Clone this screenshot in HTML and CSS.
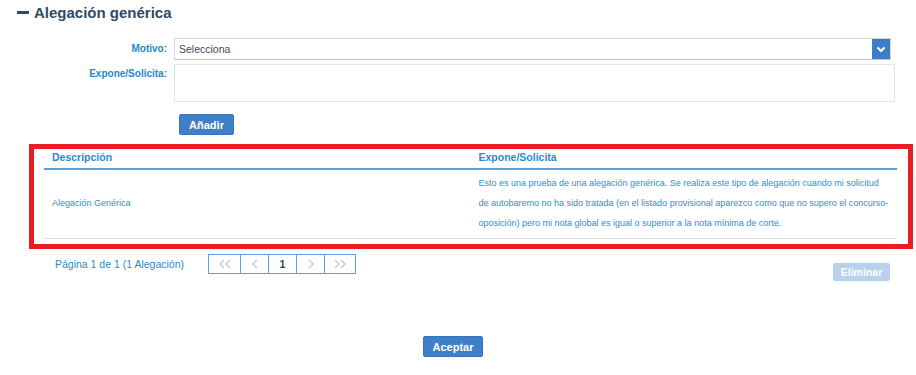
FILE: index.html
```html
<!DOCTYPE html>
<html lang="es">
<head>
    <meta charset="UTF-8">
    <meta name="viewport" content="width=device-width, initial-scale=1.0">
    <title>Alegación genérica</title>
    <link rel="stylesheet" href="styles.css">
</head>
<body>
    <div class="page">
        <h2 class="section-title"><span class="dash"></span>Alegación genérica</h2>

        <div class="form">
            <label class="form-label" for="motivo">Motivo:</label>
            <div class="select" id="motivo">
                <span class="select-value">Selecciona</span>
                <span class="select-btn">
                    <svg width="10" height="7" viewBox="0 0 10 7"><polyline points="1.5,1.5 5,5 8.5,1.5" fill="none" stroke="#fff" stroke-width="2.2"/></svg>
                </span>
            </div>

            <label class="form-label label-top" for="expone">Expone/Solicita:</label>
            <textarea id="expone" class="textarea"></textarea>

            <div class="form-actions">
                <button type="button" class="btn">Añadir</button>
            </div>
        </div>

        <div class="highlight">
            <table class="grid">
                <thead>
                    <tr>
                        <th>Descripción</th>
                        <th>Expone/Solicita</th>
                    </tr>
                </thead>
                <tbody>
                    <tr>
                        <td>Alegación Genérica</td>
                        <td>Esto es una prueba de una alegación genérica. Se realiza este tipo de alegación cuando mi solicitud de autobaremo no ha sido tratada (en el listado provisional aparezco como que no supero el concurso-oposición) pero mi nota global es igual o superior a la nota mínima de corte.</td>
                    </tr>
                </tbody>
            </table>
        </div>

        <div class="pagination">
            <span class="page-info">Página 1 de 1 (1 Alegación)</span>
            <div class="pager">
                <span class="pager-cell wide">
                    <svg width="14" height="10" viewBox="0 0 14 10"><polyline points="6,1 2,5 6,9" fill="none" stroke="#c7d2de" stroke-width="1.6"/><polyline points="12,1 8,5 12,9" fill="none" stroke="#c7d2de" stroke-width="1.6"/></svg>
                </span>
                <span class="pager-cell">
                    <svg width="6" height="10" viewBox="0 0 6 10"><polyline points="5,1 1,5 5,9" fill="none" stroke="#c7d2de" stroke-width="1.6"/></svg>
                </span>
                <span class="pager-cell current">1</span>
                <span class="pager-cell">
                    <svg width="6" height="10" viewBox="0 0 6 10"><polyline points="1,1 5,5 1,9" fill="none" stroke="#c7d2de" stroke-width="1.6"/></svg>
                </span>
                <span class="pager-cell wide">
                    <svg width="14" height="10" viewBox="0 0 14 10"><polyline points="2,1 6,5 2,9" fill="none" stroke="#c7d2de" stroke-width="1.6"/><polyline points="8,1 12,5 8,9" fill="none" stroke="#c7d2de" stroke-width="1.6"/></svg>
                </span>
            </div>
            <button type="button" class="btn btn-disabled">Eliminar</button>
        </div>

        <div class="footer">
            <button type="button" class="btn btn-accept">Aceptar</button>
        </div>
    </div>
</body>
</html>
```

FILE: styles.css
```css
body {
    margin: 0;
    font-family: "Liberation Sans", Arial, sans-serif;
    background: #fff;
    color: #333;
}
.page {
    width: 916px;
}
.section-title {
    display: flex;
    align-items: center;
    gap: 5px;
    margin: 0;
    padding: 3px 0 0 17px;
    height: 18px;
    font-size: 15px;
    font-weight: bold;
    color: #2e4a66;
}
.section-title .dash {
    width: 12px;
    height: 3px;
    background: #2e4a66;
}
.form {
    margin-top: 17px;
    display: grid;
    grid-template-columns: 167px 1fr;
    column-gap: 7px;
    row-gap: 4px;
    padding-right: 21px;
}
.form-label {
    text-align: right;
    font-size: 10px;
    font-weight: bold;
    color: #1c8ad0;
    line-height: 22px;
}
.label-top {
    line-height: 19px;
}
.select {
    display: flex;
    height: 22px;
    box-sizing: border-box;
    margin-right: 4px;
    border: 1px solid #d6d6d6;
    border-bottom-color: #c4c4c4;
}
.select-value {
    flex: 1;
    padding-left: 4px;
    font-size: 10.5px;
    line-height: 20px;
    color: #3a4a5a;
}
.select-btn {
    width: 18px;
    display: flex;
    align-items: center;
    justify-content: center;
    background: #3b7dc8;
}
.textarea {
    display: block;
    width: 100%;
    height: 38px;
    box-sizing: border-box;
    border: 1px solid #e4e4e4;
    resize: none;
    margin: 0;
}
.form-actions {
    grid-column: 2;
    margin-top: 8px;
}
.btn {
    font-family: "Liberation Sans", Arial, sans-serif;
    font-size: 11px;
    font-weight: bold;
    color: #fff;
    background: #3d7fc8;
    border: 1px solid #3673b9;
    border-radius: 2px;
    padding: 0;
    height: 21px;
    cursor: pointer;
}
.form-actions .btn {
    margin-left: 5px;
    width: 55px;
}
.highlight {
    margin: 9px 3px 0 29px;
    border: 5px solid #ec1c24;
    padding: 0 11px 5px 10px;
}
.grid {
    width: 100%;
    table-layout: fixed;
    border-collapse: collapse;
}
.grid th {
    text-align: left;
    font-size: 10.5px;
    font-weight: bold;
    color: #2a8ad0;
    height: 20px;
    padding: 0 8px 3px;
    box-sizing: border-box;
    border-bottom: 2px solid #5a9fd8;
}
.grid td {
    font-size: 9px;
    line-height: 20px;
    color: #2890d6;
    padding: 3px 8px 5px;
    border-bottom: 1px solid #dcdcdc;
    vertical-align: middle;
}
.pagination {
    display: flex;
    align-items: flex-start;
    padding: 5px 26px 0 55px;
}
.page-info {
    width: 153px;
    font-size: 10.5px;
    line-height: 20px;
    color: #2a8ad0;
}
.pager {
    display: flex;
    height: 20px;
    box-sizing: border-box;
    border: 1px solid #5ba0da;
}
.pager-cell {
    width: 28px;
    box-sizing: border-box;
    display: flex;
    align-items: center;
    justify-content: center;
    border-left: 1px solid #5ba0da;
}
.pager-cell:first-child {
    border-left: none;
}
.pager-cell.wide {
    width: 31px;
}
.pager-cell.current {
    font-size: 10.5px;
    font-weight: bold;
    color: #2e4a66;
}
.btn-disabled {
    margin-left: auto;
    margin-top: 9px;
    width: 57px;
    height: 18px;
    font-size: 10.5px;
    background: #b8d2ee;
    border-color: #b8d2ee;
    cursor: default;
}
.footer {
    margin-top: 55px;
    padding-right: 10px;
    text-align: center;
}
.btn-accept {
    width: 60px;
}
```
